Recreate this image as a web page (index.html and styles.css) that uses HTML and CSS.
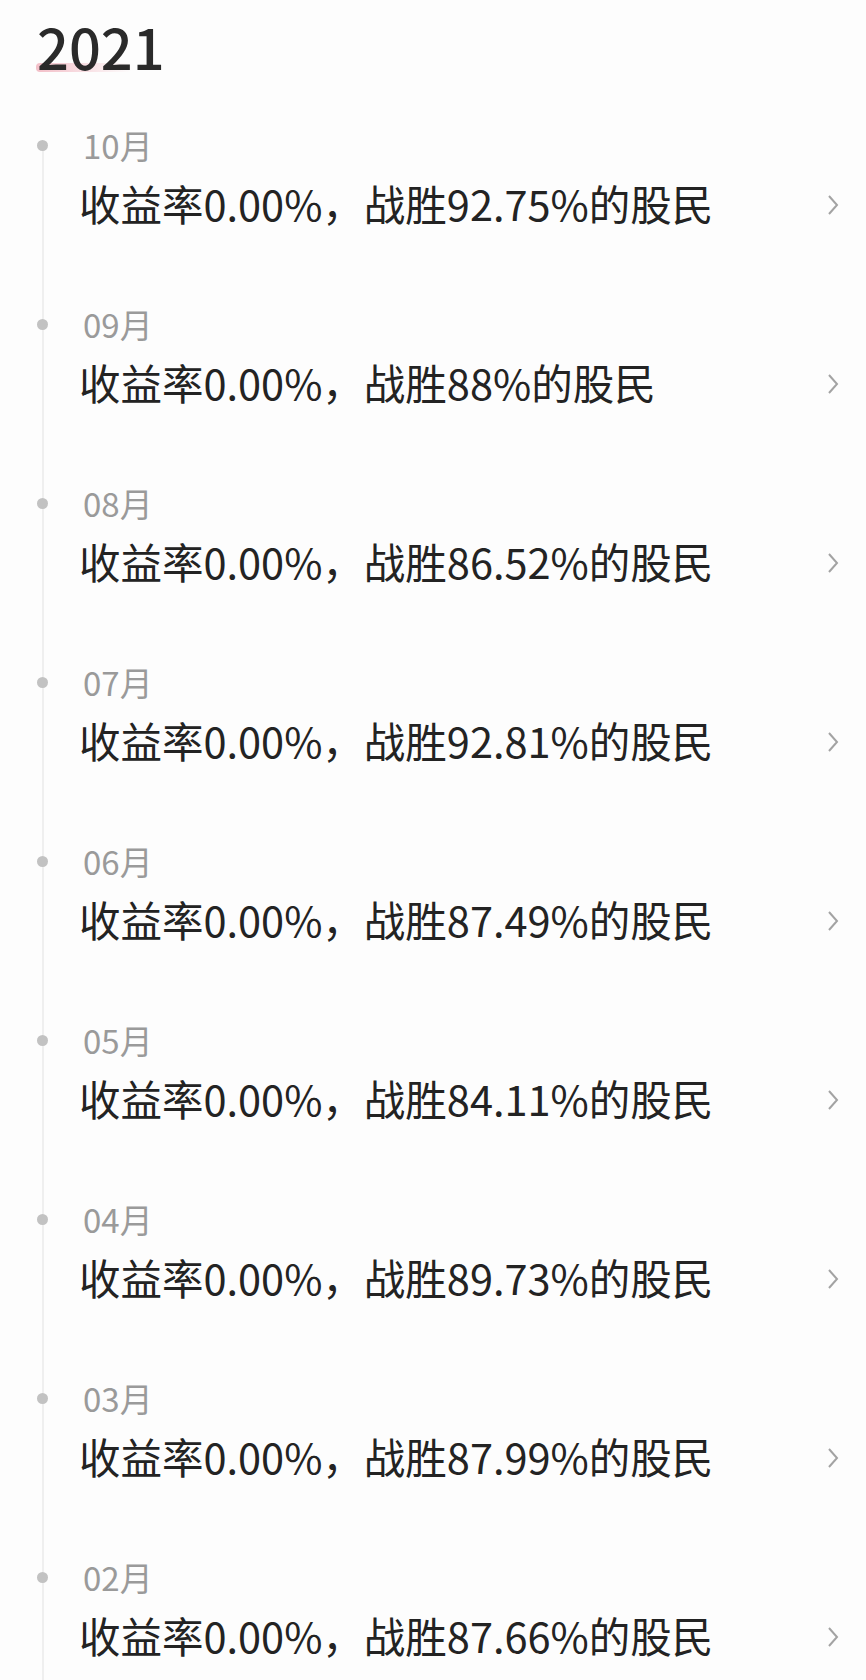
FILE: index.html
```html
<!DOCTYPE html>
<html lang="zh-CN">
<head>
  <meta charset="UTF-8">
  <title>2021 月度收益</title>
  <link rel="stylesheet" href="styles.css">
</head>
<body>

  <h1 class="anio">2021</h1>

  <ul class="linea-tiempo">
    <li class="mes">
      <span class="punto"></span>
      <div class="mes-titulo">10月</div>
      <div class="mes-fila">
        <span class="mes-texto">收益率0.00%，战胜92.75%的股民</span>
        <svg class="flecha" width="14" height="22" viewBox="0 0 14 22"><path d="M3 2 L11 11 L3 20" fill="none" stroke="#a3a3a3" stroke-width="2"/></svg>
      </div>
    </li>
    <li class="mes">
      <span class="punto"></span>
      <div class="mes-titulo">09月</div>
      <div class="mes-fila">
        <span class="mes-texto">收益率0.00%，战胜88%的股民</span>
        <svg class="flecha" width="14" height="22" viewBox="0 0 14 22"><path d="M3 2 L11 11 L3 20" fill="none" stroke="#a3a3a3" stroke-width="2"/></svg>
      </div>
    </li>
    <li class="mes">
      <span class="punto"></span>
      <div class="mes-titulo">08月</div>
      <div class="mes-fila">
        <span class="mes-texto">收益率0.00%，战胜86.52%的股民</span>
        <svg class="flecha" width="14" height="22" viewBox="0 0 14 22"><path d="M3 2 L11 11 L3 20" fill="none" stroke="#a3a3a3" stroke-width="2"/></svg>
      </div>
    </li>
    <li class="mes">
      <span class="punto"></span>
      <div class="mes-titulo">07月</div>
      <div class="mes-fila">
        <span class="mes-texto">收益率0.00%，战胜92.81%的股民</span>
        <svg class="flecha" width="14" height="22" viewBox="0 0 14 22"><path d="M3 2 L11 11 L3 20" fill="none" stroke="#a3a3a3" stroke-width="2"/></svg>
      </div>
    </li>
    <li class="mes">
      <span class="punto"></span>
      <div class="mes-titulo">06月</div>
      <div class="mes-fila">
        <span class="mes-texto">收益率0.00%，战胜87.49%的股民</span>
        <svg class="flecha" width="14" height="22" viewBox="0 0 14 22"><path d="M3 2 L11 11 L3 20" fill="none" stroke="#a3a3a3" stroke-width="2"/></svg>
      </div>
    </li>
    <li class="mes">
      <span class="punto"></span>
      <div class="mes-titulo">05月</div>
      <div class="mes-fila">
        <span class="mes-texto">收益率0.00%，战胜84.11%的股民</span>
        <svg class="flecha" width="14" height="22" viewBox="0 0 14 22"><path d="M3 2 L11 11 L3 20" fill="none" stroke="#a3a3a3" stroke-width="2"/></svg>
      </div>
    </li>
    <li class="mes">
      <span class="punto"></span>
      <div class="mes-titulo">04月</div>
      <div class="mes-fila">
        <span class="mes-texto">收益率0.00%，战胜89.73%的股民</span>
        <svg class="flecha" width="14" height="22" viewBox="0 0 14 22"><path d="M3 2 L11 11 L3 20" fill="none" stroke="#a3a3a3" stroke-width="2"/></svg>
      </div>
    </li>
    <li class="mes">
      <span class="punto"></span>
      <div class="mes-titulo">03月</div>
      <div class="mes-fila">
        <span class="mes-texto">收益率0.00%，战胜87.99%的股民</span>
        <svg class="flecha" width="14" height="22" viewBox="0 0 14 22"><path d="M3 2 L11 11 L3 20" fill="none" stroke="#a3a3a3" stroke-width="2"/></svg>
      </div>
    </li>
    <li class="mes">
      <span class="punto"></span>
      <div class="mes-titulo">02月</div>
      <div class="mes-fila">
        <span class="mes-texto">收益率0.00%，战胜87.66%的股民</span>
        <svg class="flecha" width="14" height="22" viewBox="0 0 14 22"><path d="M3 2 L11 11 L3 20" fill="none" stroke="#a3a3a3" stroke-width="2"/></svg>
      </div>
    </li>
  </ul>

</body>
</html>
```

FILE: styles.css
```css
body {
  margin: 0;
  background: #fdfdfd;
  font-family: "Noto Sans CJK SC", "Noto Sans", sans-serif;
  color: #262626;
  overflow: hidden;
}

/* titulo del año con subrayado rosado */
.anio {
  position: relative;
  margin: 0;
  padding: 14px 0 0 37px;
  font-size: 56px;
  font-weight: 500;
  line-height: 64px;
  color: #2a2a2a;
}
.anio::after {
  content: "";
  position: absolute;
  left: 36px;
  top: 63px;
  width: 96px;
  height: 9px;
  background: linear-gradient(to right, rgba(236, 150, 165, 0.6), rgba(236, 150, 165, 0));
  border-radius: 4px;
  z-index: -1;
}

/* linea de tiempo */
.linea-tiempo {
  position: relative;
  list-style: none;
  margin: 47px 0 0;
  padding: 0 26px 0 80px;
}
.linea-tiempo::before {
  content: "";
  position: absolute;
  left: 42px;
  top: 20px;
  bottom: 0;
  width: 2px;
  background: #efefef;
}

.mes {
  position: relative;
  padding-bottom: 71px;
}
.punto {
  position: absolute;
  left: -43px;
  top: 15px;
  width: 11px;
  height: 11px;
  border-radius: 50%;
  background: #c2c2c2;
}
.mes-titulo {
  padding-left: 3px;
  font-size: 33px;
  line-height: 40px;
  color: #9a9a9a;
}
.mes-fila {
  display: flex;
  align-items: center;
  justify-content: space-between;
  margin-top: 8px;
  height: 60px;
}
.mes-texto {
  margin-left: -1px;
  font-size: 41.5px;
  line-height: 60px;
  color: #232323;
}
.flecha { display: block; margin-top: 4px; }
```
